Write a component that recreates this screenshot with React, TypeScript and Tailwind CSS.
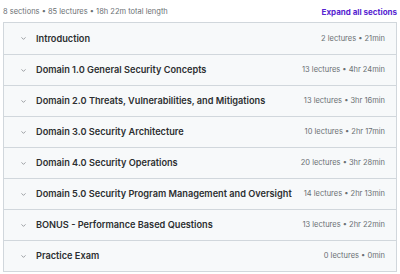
import { ChevronDown } from 'lucide-react';

const sections = [
  { title: 'Introduction', meta: '2 lectures • 21min' },
  { title: 'Domain 1.0 General Security Concepts', meta: '13 lectures • 4hr 24min' },
  { title: 'Domain 2.0 Threats, Vulnerabilities, and Mitigations', meta: '13 lectures • 3hr 16min' },
  { title: 'Domain 3.0 Security Architecture', meta: '10 lectures • 2hr 17min' },
  { title: 'Domain 4.0 Security Operations', meta: '20 lectures • 3hr 28min' },
  { title: 'Domain 5.0 Security Program Management and Oversight', meta: '14 lectures • 2hr 13min' },
  { title: 'BONUS - Performance Based Questions', meta: '13 lectures • 2hr 22min' },
  { title: 'Practice Exam', meta: '0 lectures • 0min' },
];

export default function App() {
  return (
    <div className="w-[400px] h-[274px] bg-white px-[3px] font-['Inter',sans-serif] text-[#2d2f31]">
      {/* header */}
      <div className="flex h-[22px] items-center justify-between pt-[1px]">
        <span className="text-[7.5px] text-[#6a6f73]">8 sections • 85 lectures • 18h 22m total length</span>
        <span className="text-[8px] font-bold text-[#5624d0]">Expand all sections</span>
      </div>

      {/* curriculum */}
      <div className="border border-[#d1d7dc]">
        {sections.map((s, i) => (
          <div
            key={i}
            className={`flex h-[31px] items-center bg-[#f7f9fa] pl-[16px] pr-[11px] ${i > 0 ? 'border-t border-[#d1d7dc]' : ''}`}
          >
            <ChevronDown className="h-[7px] w-[7px] text-[#6a6f73]" strokeWidth={2.2} />
            <span className="ml-[9px] flex-1 text-[9.2px] font-semibold">{s.title}</span>
            <span className="text-[7.5px] text-[#6a6f73]">{s.meta}</span>
          </div>
        ))}
      </div>
    </div>
  );
}
